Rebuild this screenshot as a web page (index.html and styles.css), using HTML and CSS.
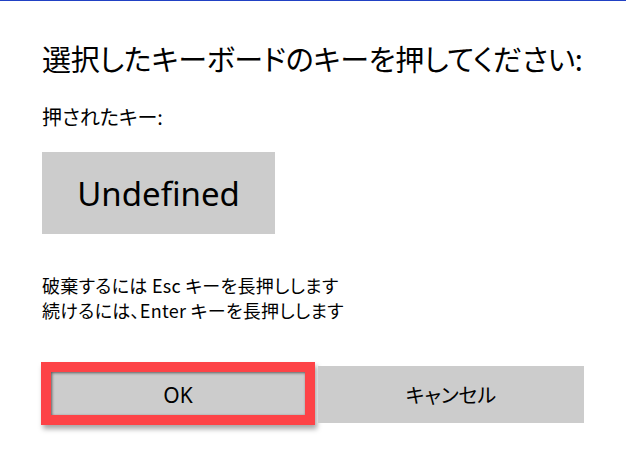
FILE: index.html
```html
<!DOCTYPE html>
<html lang="ja">
<head>
<meta charset="utf-8">
<link rel="stylesheet" href="styles.css">
</head>
<body>
<div class="dialog">
  <h1 class="title">選択したキーボードのキーを押してください:</h1>
  <div class="label">押されたキー:</div>
  <div class="keybox">Undefined</div>
  <div class="hints">
    <div>破棄するには Esc キーを長押しします</div>
    <div>続けるには、Enter キーを長押しします</div>
  </div>
  <div class="buttons">
    <div class="btn btn-ok">OK<span class="highlight"></span></div>
    <div class="btn">キャンセル</div>
  </div>
</div>
</body>
</html>
```
FILE: styles.css
```css
html, body {
  margin: 0;
  padding: 0;
  background: #ffffff;
}
body {
  width: 626px;
  height: 466px;
  overflow: hidden;
  border-top: 1px solid #2141c4;
  box-sizing: border-box;
  font-family: "Noto Sans CJK JP", "Noto Sans", sans-serif;
  font-feature-settings: "palt";
  color: #000;
}
.dialog {
  display: flex;
  flex-direction: column;
  padding: 0 42px;
}
.title {
  margin: 37px 0 0;
  font-size: 29px;
  font-weight: 400;
  letter-spacing: -0.2px;
  line-height: 40px;
  white-space: nowrap;
}
.label {
  margin-top: 26px;
  font-size: 20px;
  line-height: 26px;
}
.keybox {
  margin-top: 22px;
  width: 233px;
  height: 82px;
  background: #cccccc;
  display: flex;
  align-items: center;
  justify-content: center;
  font-family: "Noto Sans", sans-serif;
  font-size: 33px;
}
.hints {
  margin-top: 39px;
  font-size: 18px;
  letter-spacing: 0.3px;
  line-height: 25px;
}
.buttons {
  margin-top: 43px;
  display: flex;
  gap: 4px;
}
.btn {
  position: relative;
  flex: 1;
  height: 57px;
  background: #cccccc;
  display: flex;
  align-items: center;
  justify-content: center;
  font-size: 20px;
}
.btn-ok {
  flex: 0 0 272px;
  font-family: "Noto Sans", sans-serif;
  font-size: 21px;
}
.highlight {
  position: absolute;
  left: -1px;
  top: -4px;
  right: -1px;
  bottom: -2px;
  border: 10px solid #fd4347;
  box-shadow: 2px 4px 5px rgba(0,0,0,0.35), inset 1px 1px 3px rgba(0,0,0,0.55);
}
```
